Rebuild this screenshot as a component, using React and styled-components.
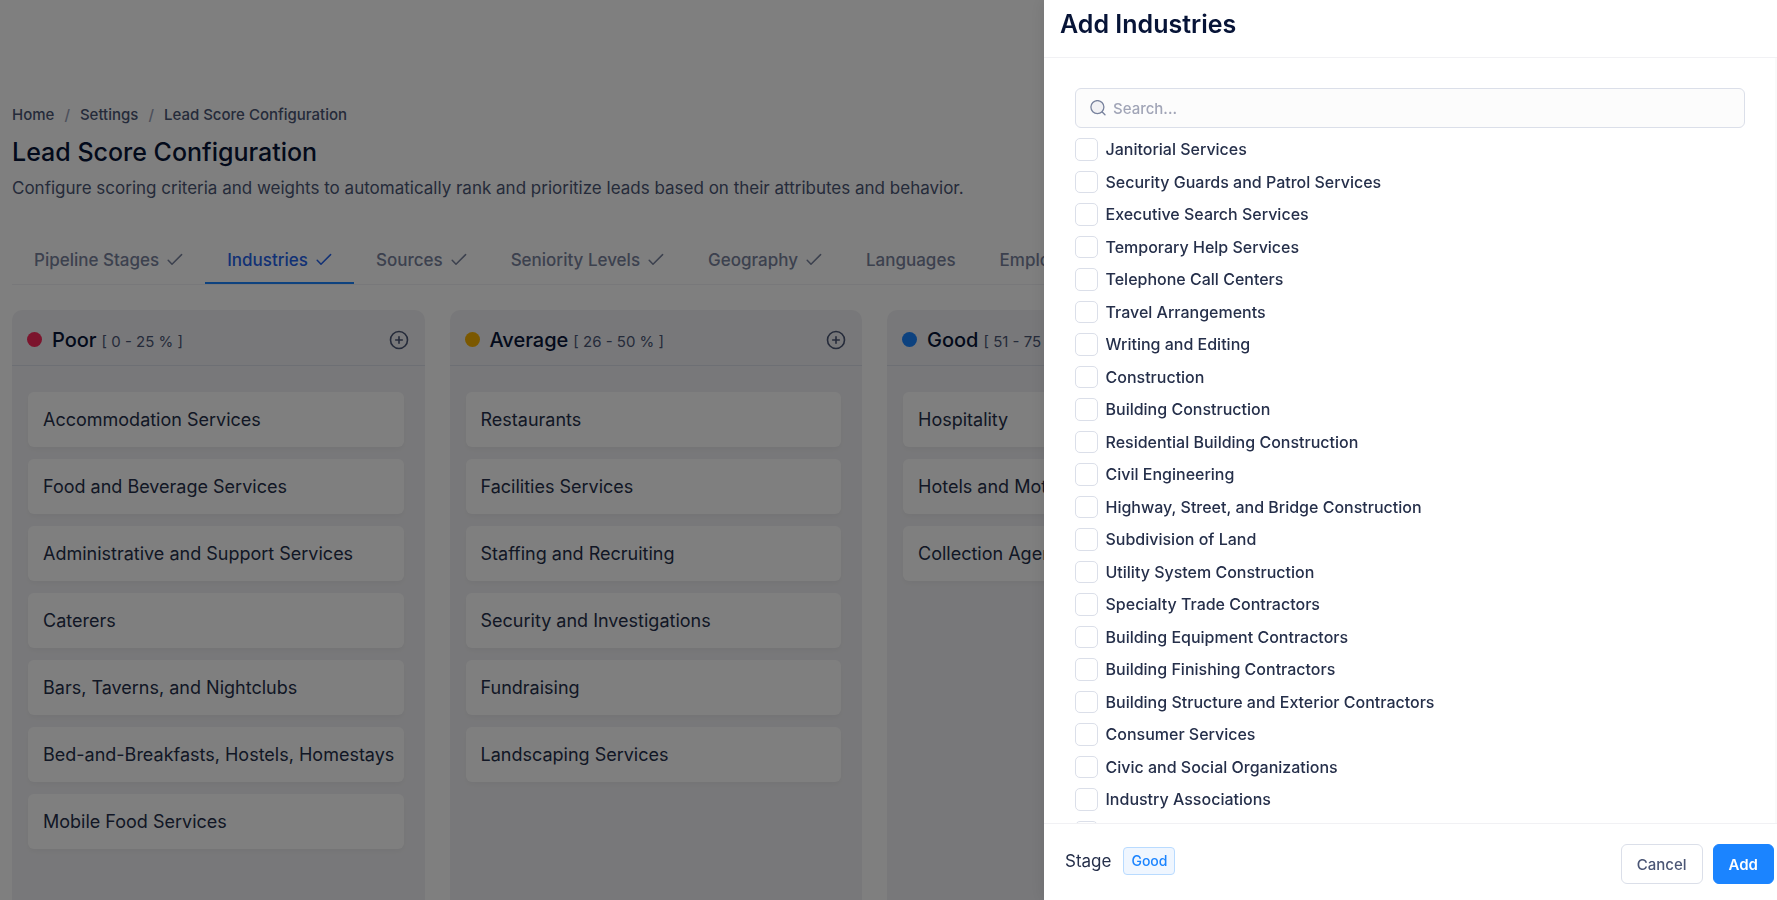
import React, { useState } from 'react'
import styled, { createGlobalStyle } from 'styled-components'

const vars = {
  ink: '#071437',
  text: '#252f4a',
  grey: '#4b5675',
  muted: '#78829d',
  light: '#99a1b7',
  border: '#dbdfe9',
  line: '#f1f1f4',
  blue: '#1b84ff'
}

const tabs = [
  { name: 'Pipeline Stages', done: true },
  { name: 'Industries', done: true },
  { name: 'Sources', done: true },
  { name: 'Seniority Levels', done: true },
  { name: 'Geography', done: true },
  { name: 'Languages' },
  { name: 'Employee Count' }
]

const stages = [
  {
    name: 'Poor',
    range: '[ 0 - 25 % ]',
    color: '#f8285a',
    items: [
      'Accommodation Services',
      'Food and Beverage Services',
      'Administrative and Support Services',
      'Caterers',
      'Bars, Taverns, and Nightclubs',
      'Bed-and-Breakfasts, Hostels, Homestays',
      'Mobile Food Services'
    ]
  },
  {
    name: 'Average',
    range: '[ 26 - 50 % ]',
    color: '#f6b100',
    items: [
      'Restaurants',
      'Facilities Services',
      'Staffing and Recruiting',
      'Security and Investigations',
      'Fundraising',
      'Landscaping Services'
    ]
  },
  {
    name: 'Good',
    range: '[ 51 - 75 % ]',
    color: '#1b84ff',
    items: ['Hospitality', 'Hotels and Motels', 'Collection Agencies']
  },
  { name: 'Excellent', range: '[ 76 - 100 % ]', color: '#17c653', items: [] }
]

const industries = [
  'Janitorial Services',
  'Security Guards and Patrol Services',
  'Executive Search Services',
  'Temporary Help Services',
  'Telephone Call Centers',
  'Travel Arrangements',
  'Writing and Editing',
  'Construction',
  'Building Construction',
  'Residential Building Construction',
  'Civil Engineering',
  'Highway, Street, and Bridge Construction',
  'Subdivision of Land',
  'Utility System Construction',
  'Specialty Trade Contractors',
  'Building Equipment Contractors',
  'Building Finishing Contractors',
  'Building Structure and Exterior Contractors',
  'Consumer Services',
  'Civic and Social Organizations',
  'Industry Associations',
  'Political Organizations'
]

const CheckIcon = () => (
  <svg width="16" height="16" viewBox="0 0 16 16" fill="none" stroke="currentColor" strokeWidth="1.5" strokeLinecap="round" strokeLinejoin="round" aria-hidden="true">
    <path d="M1.2 8.2 5 12.2 14.6 2.6" />
  </svg>
)

const PlusIcon = () => (
  <svg width="20" height="20" viewBox="0 0 20 20" fill="none" stroke="currentColor" strokeWidth="1.6" strokeLinecap="round" aria-hidden="true">
    <circle cx="10" cy="10" r="8.5" />
    <path d="M6.7 10h6.6M10 6.7v6.6" />
  </svg>
)

const SearchIcon = () => (
  <svg width="16" height="16" viewBox="0 0 16 16" strokeWidth="1.3" aria-hidden="true">
    <circle cx="7.4" cy="7.1" r="6.5" fill="#f1f1f4" stroke="currentColor" />
    <path d="m12.2 12 2.8 2.8" fill="none" stroke="currentColor" strokeLinecap="round" />
  </svg>
)

const App = () => {
  const [selected, setSelected] = useState([])
  const [query, setQuery] = useState('')

  const toggle = (name) => {
    setSelected(selected.includes(name) ? selected.filter((n) => n !== name) : [...selected, name])
  }

  const visible = industries.filter((n) => n.toLowerCase().includes(query.toLowerCase()))

  return (
    <>
      <GlobalStyle />

      <Page>
        <Breadcrumb aria-label="breadcrumb">
          <a href="#home">Home</a>
          <span>/</span>
          <a href="#settings">Settings</a>
          <span>/</span>
          <a href="#lead-score">Lead Score Configuration</a>
        </Breadcrumb>
        <PageTitle>Lead Score Configuration</PageTitle>
        <Subtitle>
          Configure scoring criteria and weights to automatically rank and prioritize leads based on their attributes and behavior.
        </Subtitle>

        <TabBar>
          {tabs.map((tab) => (
            <Tab key={tab.name} type="button" $active={tab.name === 'Industries'}>
              {tab.name}
              {tab.done && <CheckIcon />}
            </Tab>
          ))}
        </TabBar>

        <Board>
          {stages.map((stage) => (
            <Column key={stage.name}>
              <ColumnHeader>
                <Dot $color={stage.color} />
                <h2>{stage.name}</h2>
                <span>{stage.range}</span>
                <IconButton type="button" aria-label={`Add to ${stage.name}`}><PlusIcon /></IconButton>
              </ColumnHeader>
              <CardList>
                {stage.items.map((item) => <Card key={item}>{item}</Card>)}
              </CardList>
            </Column>
          ))}
        </Board>
      </Page>

      <Overlay />

      <Drawer role="dialog" aria-label="Add Industries">
        <DrawerHeader>
          <h2>Add Industries</h2>
        </DrawerHeader>

        <DrawerBody>
          <SearchBox>
            <SearchIcon />
            <input
              type="text"
              aria-label="Search industries"
              placeholder="Search..."
              value={query}
              onChange={(e) => setQuery(e.target.value)} />
          </SearchBox>

          {visible.map((name) => (
            <Option key={name}>
              <input type="checkbox" checked={selected.includes(name)} onChange={() => toggle(name)} />
              <span>{name}</span>
            </Option>
          ))}
        </DrawerBody>

        <DrawerFooter>
          <Stage>
            <span>Stage</span>
            <Badge>Good</Badge>
          </Stage>
          <Actions>
            <Button type="button">Cancel</Button>
            <Button type="button" $primary>Add</Button>
          </Actions>
        </DrawerFooter>
      </Drawer>
    </>
  )
}

const GlobalStyle = createGlobalStyle`
* {
  box-sizing: border-box;
}

body {
  margin: 0;
  overflow: hidden;
  background: white;
  color: ${vars.ink};
  font-family: Inter, sans-serif;
  font-size: 16px;
}

h1, h2, p {
  margin: 0;
}

button, input {
  font-family: inherit;
}
`

const Page = styled.main`
display: flex;
flex-direction: column;
height: 100vh;
padding: 104px 40px 0 12px;
overflow: hidden;
`

const Breadcrumb = styled.nav`
display: flex;
gap: 10px;
font-size: 15px;
font-weight: 500;
line-height: 22px;

a {
  color: ${vars.grey};
  text-decoration: none;
}

span {
  color: ${vars.light};
}
`

const PageTitle = styled.h1`
margin-top: 8px;
font-size: 25px;
font-weight: 500;
line-height: 36px;
`

const Subtitle = styled.p`
margin-top: 6px;
color: ${vars.grey};
font-size: 17px;
line-height: 24px;
`

const TabBar = styled.div`
display: flex;
margin-top: 34px;
border-bottom: 1px solid ${vars.line};
white-space: nowrap;
`

const Tab = styled.button`
display: flex;
align-items: center;
gap: 8px;
height: 50px;
padding: 4px 22px 0;
border: none;
border-bottom: 2px solid ${(p) => (p.$active ? vars.blue : 'transparent')};
background: none;
color: ${(p) => (p.$active ? '#2563eb' : vars.muted)};
font-size: 17px;
font-weight: 500;
`

const Board = styled.div`
display: grid;
grid-template-columns: repeat(4, minmax(0, 1fr));
gap: 25px;
flex: 1;
margin-top: 25px;
`

const Column = styled.section`
border-radius: 10px 10px 0 0;
background: ${vars.line};
`

const ColumnHeader = styled.header`
display: flex;
align-items: center;
height: 56px;
padding: 4px 16px 0 15px;
border-bottom: 1px solid ${vars.border};

h2 {
  margin: 0 5px 0 10px;
  font-size: 20px;
  font-weight: 500;
}

span {
  padding-top: 3px;
  color: ${vars.grey};
  font-size: 15px;
}
`

const Dot = styled.i`
width: 15px;
height: 15px;
border-radius: 50%;
background: ${(p) => p.$color};
`

const IconButton = styled.button`
display: flex;
margin-left: auto;
padding: 0;
border: none;
background: none;
color: ${vars.grey};
`

const CardList = styled.div`
display: flex;
flex-direction: column;
gap: 12px;
padding: 26px 21px 26px 16px;
`

const Card = styled.article`
padding: 15px;
border-radius: 6px;
background: white;
box-shadow: 0 3px 4px rgba(0, 0, 0, 0.03);
color: ${vars.text};
font-size: 18px;
line-height: 25px;
white-space: nowrap;
`

const Overlay = styled.div`
position: fixed;
inset: 0;
background: rgba(0, 0, 0, 0.5);
`

const Drawer = styled.aside`
position: fixed;
top: 0;
right: 0;
bottom: 0;
display: flex;
flex-direction: column;
width: 733px;
max-width: 100%;
background: white;
box-shadow: 0 0 16px rgba(0, 0, 0, 0.1);
`

const DrawerHeader = styled.header`
padding: 6px 16px 15px;
border-bottom: 1px solid ${vars.line};

h2 {
  font-size: 25px;
  font-weight: 600;
  line-height: 36px;
}
`

const DrawerBody = styled.div`
flex: 1;
min-height: 0;
padding: 30px 30px 0 31px;
border-right: 2px solid #fafafa;
overflow: hidden;
`

const SearchBox = styled.div`
display: flex;
align-items: center;
gap: 7px;
height: 40px;
margin-bottom: 10px;
padding: 0 14px;
border: 1px solid ${vars.border};
border-radius: 6px;
background: #fcfcfc;
color: ${vars.muted};

input {
  flex: 1;
  padding: 0;
  border: none;
  outline: none;
  background: none;
  color: ${vars.text};
  font-size: 15px;
  font-weight: 500;
}

input::placeholder {
  color: #a1a5b7;
}
`

const Option = styled.label`
display: flex;
align-items: center;
gap: 8px;
height: 1.5em;
margin-bottom: 10px;
color: ${vars.text};
font-size: 15px;
font-weight: 500;

input {
  appearance: none;
  width: 1.5em;
  height: 1.5em;
  margin: 0;
  border: 1px solid ${vars.border};
  border-radius: 5px;
  background: white;
  font-size: inherit;
}

input:checked {
  border-color: ${vars.blue};
  background: ${vars.blue};
}

span {
  font-size: 16px;
}
`

const DrawerFooter = styled.footer`
display: flex;
align-items: center;
justify-content: space-between;
height: 77px;
padding: 4px 3px 0 21px;
border-top: 1px solid ${vars.line};
`

const Stage = styled.div`
display: flex;
align-items: center;
gap: 12px;
padding-bottom: 6px;
color: ${vars.text};
font-size: 17px;
`

const Badge = styled.span`
padding: 4px 7px;
border: 1px solid #b9dbff;
border-radius: 4px;
background: #eff6ff;
color: ${vars.blue};
font-size: 14px;
font-weight: 500;
line-height: 18px;
`

const Actions = styled.div`
display: flex;
gap: 10px;
`

const Button = styled.button`
height: 40px;
padding: 0 15px;
border: 1px solid ${(p) => (p.$primary ? vars.blue : vars.border)};
border-radius: 6px;
background: ${(p) => (p.$primary ? vars.blue : 'white')};
color: ${(p) => (p.$primary ? 'white' : vars.grey)};
font-size: 15px;
font-weight: ${(p) => (p.$primary ? 600 : 500)};
`

export default App
